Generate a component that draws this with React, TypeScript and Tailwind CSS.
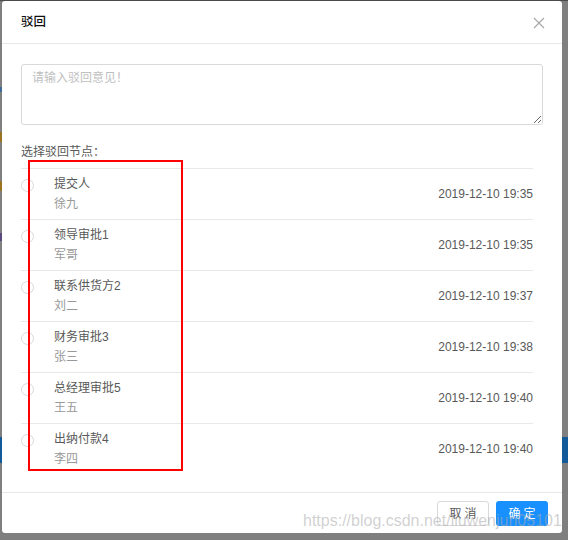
import React from "react";

const rows = [
  { title: "提交人", name: "徐九", time: "2019-12-10 19:35" },
  { title: "领导审批1", name: "军哥", time: "2019-12-10 19:35" },
  { title: "联系供货方2", name: "刘二", time: "2019-12-10 19:37" },
  { title: "财务审批3", name: "张三", time: "2019-12-10 19:38" },
  { title: "总经理审批5", name: "王五", time: "2019-12-10 19:40" },
  { title: "出纳付款4", name: "李四", time: "2019-12-10 19:40" },
];

const font = { fontFamily: '"Liberation Sans", "Noto Sans CJK SC", sans-serif' };

export default function App() {
  return (
    <div
      className="relative w-[568px] h-[540px] overflow-hidden bg-[#7f7f7f] pl-[2px] border-t border-[#4a4a4a]"
      style={font}
    >
      {/* underlying page bits peeking through overlay */}
      <div className="absolute left-0 top-[86px] w-[2px] h-[5px] bg-[#3f6b98]" />
      <div className="absolute left-0 top-[131px] w-[2px] h-[10px] bg-[#9a7420]" />
      <div className="absolute left-0 top-[180px] w-[2px] h-[10px] bg-[#9a7420]" />
      <div className="absolute left-0 top-[232px] w-[2px] h-[8px] bg-[#5a4a80]" />
      <div className="absolute left-0 top-[436px] w-[2px] h-[26px] bg-[#135a9a]" />
      <div className="absolute right-0 top-[436px] w-[6px] h-[26px] bg-[#135a9a]" />

      <div className="relative w-[560px] bg-white rounded-[3px] flex flex-col">
        {/* header */}
        <div className="h-[43px] border-b border-[#e8e8e8] flex items-center justify-between pl-[19px] pr-[17px]">
          <span className="text-[12.5px] leading-[20px] text-[#111111] font-medium">驳回</span>
          <svg width="12" height="12" viewBox="0 0 12 12" className="mt-[1px]">
            <path d="M1 1 L11 11 M11 1 L1 11" stroke="#a6a6a6" strokeWidth="1.1" fill="none" />
          </svg>
        </div>

        {/* body */}
        <div className="px-[19px] pt-[20px] pb-[18px] flex flex-col">
          <textarea
            className="w-[522px] h-[61px] border border-[#d9d9d9] rounded-[3px] px-[10px] py-[3px] text-[12px] leading-[20px] text-[#595959] placeholder:text-[#bfbfbf] outline-none"
            style={font}
            placeholder="请输入驳回意见！"
          />
          <div className="mt-[17px] text-[12px] leading-[20px] text-[#595959]">选择驳回节点：</div>
          <div className="mt-[6px] w-[512px] flex flex-col">
            {rows.map((r, i) => (
              <div
                key={i}
                className="h-[51px] border-t border-[#e8e8e8] flex items-start"
              >
                <div className="mt-[10px] w-[13px] h-[13px] rounded-full border border-[#d9d9d9] bg-white shrink-0" />
                <div className="ml-[20px] pt-[5px] flex flex-col">
                  <span className="text-[12px] leading-[20px] text-[#595959]">{r.title}</span>
                  <span className="text-[12px] leading-[20px] text-[#999999]">{r.name}</span>
                </div>
                <div className="ml-auto self-center text-[12px] leading-[20px] text-[#595959]">
                  {r.time}
                </div>
              </div>
            ))}
          </div>
        </div>

        {/* footer */}
        <div className="border-t border-[#e8e8e8] pt-[8px] pb-[7px] pr-[14px] flex justify-end gap-[7px]">
          <button className="w-[52px] h-[25px] rounded-[3px] border border-[#d9d9d9] bg-white text-[12px] text-[#595959] flex items-center justify-center tracking-[3px] pl-[3px]">
            取消
          </button>
          <button className="w-[52px] h-[25px] rounded-[3px] bg-[#1890ff] text-[12px] text-white flex items-center justify-center tracking-[3px] pl-[3px]">
            确定
          </button>
        </div>
      </div>

      {/* red annotation box */}
      <div className="absolute left-[28px] top-[159px] w-[155px] h-[311px] border-2 border-[#ff0000]" />

      {/* watermark */}
      <div
        className="absolute left-[303px] top-[510px] text-[16px] leading-[20px] text-[rgba(170,170,170,0.55)] whitespace-nowrap"
        style={{ fontFamily: '"Liberation Sans", sans-serif' }}
      >
        https://blog.csdn.net/liuwenjun05101
      </div>
    </div>
  );
}
